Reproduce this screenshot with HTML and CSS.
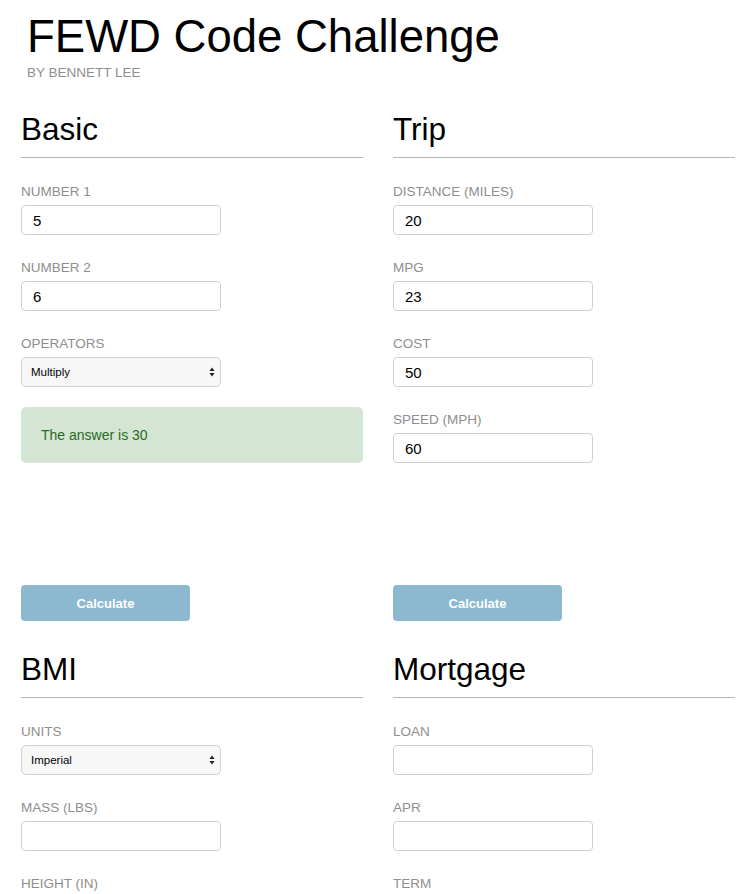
FILE: index.html
```html
<!DOCTYPE html>
<html lang="en">
<head>
<meta charset="utf-8">
<title>FEWD Code Challenge</title>
<link rel="stylesheet" href="styles.css">
</head>
<body>
<div class="page">
  <header class="masthead">
    <h1 class="title">FEWD Code Challenge</h1>
    <p class="byline">By Bennett Lee</p>
  </header>

  <main class="grid">
    <section class="card">
      <h2 class="card-title">Basic</h2>
      <div class="fields">
        <div class="field">
          <label class="label">Number 1</label>
          <input class="input" type="text" value="5">
        </div>
        <div class="field">
          <label class="label">Number 2</label>
          <input class="input" type="text" value="6">
        </div>
        <div class="field">
          <label class="label">Operators</label>
          <div class="select-wrap">
            <select class="select"><option>Multiply</option></select>
            <svg class="select-arrows" width="6" height="10" viewBox="0 0 6 10"><path d="M3 0.5 L5.6 4 L0.4 4 Z M3 9.5 L5.6 6 L0.4 6 Z" fill="#222"/></svg>
          </div>
        </div>
        <div class="alert">The answer is 30</div>
      </div>
      <button class="btn">Calculate</button>
    </section>

    <section class="card">
      <h2 class="card-title">Trip</h2>
      <div class="fields">
        <div class="field">
          <label class="label">Distance (miles)</label>
          <input class="input" type="text" value="20">
        </div>
        <div class="field">
          <label class="label">MPG</label>
          <input class="input" type="text" value="23">
        </div>
        <div class="field">
          <label class="label">Cost</label>
          <input class="input" type="text" value="50">
        </div>
        <div class="field">
          <label class="label">Speed (mph)</label>
          <input class="input" type="text" value="60">
        </div>
      </div>
      <button class="btn">Calculate</button>
    </section>

    <section class="card">
      <h2 class="card-title">BMI</h2>
      <div class="fields">
        <div class="field">
          <label class="label">Units</label>
          <div class="select-wrap">
            <select class="select"><option>Imperial</option></select>
            <svg class="select-arrows" width="6" height="10" viewBox="0 0 6 10"><path d="M3 0.5 L5.6 4 L0.4 4 Z M3 9.5 L5.6 6 L0.4 6 Z" fill="#222"/></svg>
          </div>
        </div>
        <div class="field">
          <label class="label">Mass (lbs)</label>
          <input class="input" type="text">
        </div>
        <div class="field">
          <label class="label">Height (in)</label>
          <input class="input" type="text">
        </div>
      </div>
    </section>

    <section class="card">
      <h2 class="card-title">Mortgage</h2>
      <div class="fields">
        <div class="field">
          <label class="label">Loan</label>
          <input class="input" type="text">
        </div>
        <div class="field">
          <label class="label">APR</label>
          <input class="input" type="text">
        </div>
        <div class="field">
          <label class="label">Term</label>
          <input class="input" type="text">
        </div>
      </div>
    </section>
  </main>
</div>
</body>
</html>
```

FILE: styles.css
```css
html, body {
  margin: 0;
  padding: 0;
  background: #fff;
}

body {
  font-family: "Liberation Sans", Arial, Helvetica, sans-serif;
  color: #000;
}

.page {
  padding: 11px 20px 0 21px;
}

.masthead {
  padding-left: 6px;
}

.title {
  margin: 0;
  font-size: 45.5px;
  line-height: 52px;
  font-weight: normal;
  color: #000;
}

.byline {
  margin: 2px 0 0;
  font-size: 13.5px;
  line-height: 16px;
  text-transform: uppercase;
  color: #8e8e8e;
}

.grid {
  margin-top: 30px;
  display: grid;
  grid-template-columns: 1fr 1fr;
  column-gap: 30px;
  row-gap: 30px;
}

.card-title {
  margin: 0;
  font-size: 31.5px;
  line-height: 36px;
  font-weight: normal;
  padding-bottom: 10px;
  border-bottom: 1px solid #b5b5b5;
}

.fields {
  box-sizing: border-box;
  height: 427px;
  padding-top: 26px;
}

.field {
  margin-bottom: 25px;
}

.label {
  display: block;
  margin-bottom: 5px;
  font-size: 13.5px;
  line-height: 16px;
  text-transform: uppercase;
  color: #8e8e8e;
}

.input {
  box-sizing: border-box;
  display: block;
  width: 200px;
  height: 30px;
  margin: 0;
  padding: 0 11px;
  border: 1px solid #cfcfcf;
  border-radius: 4px;
  background: #fff;
  font-family: "Liberation Sans", Arial, sans-serif;
  font-size: 15px;
  color: #000;
  outline: none;
}

.select-wrap {
  position: relative;
  width: 200px;
}

.select {
  box-sizing: border-box;
  display: block;
  width: 200px;
  height: 30px;
  margin: 0;
  padding: 0 20px 0 9px;
  border: 1px solid #cfcfcf;
  border-radius: 5px;
  background: #f7f7f7;
  font-family: "Liberation Sans", Arial, sans-serif;
  font-size: 11.5px;
  color: #000;
  -webkit-appearance: none;
  appearance: none;
}

.select-arrows {
  position: absolute;
  right: 6px;
  top: 10px;
  pointer-events: none;
}

.alert {
  margin-top: -5px;
  box-sizing: border-box;
  height: 56px;
  padding: 0 20px;
  display: flex;
  align-items: center;
  border-radius: 5px;
  background: #d4e6d3;
  color: #2a6a1c;
  font-size: 14px;
}

.btn {
  display: block;
  width: 169px;
  height: 36px;
  margin: 0;
  padding: 0;
  border: none;
  border-radius: 4px;
  background: #8cb9d0;
  color: #fff;
  font-family: "Liberation Sans", Arial, sans-serif;
  font-size: 13px;
  font-weight: bold;
}
```
